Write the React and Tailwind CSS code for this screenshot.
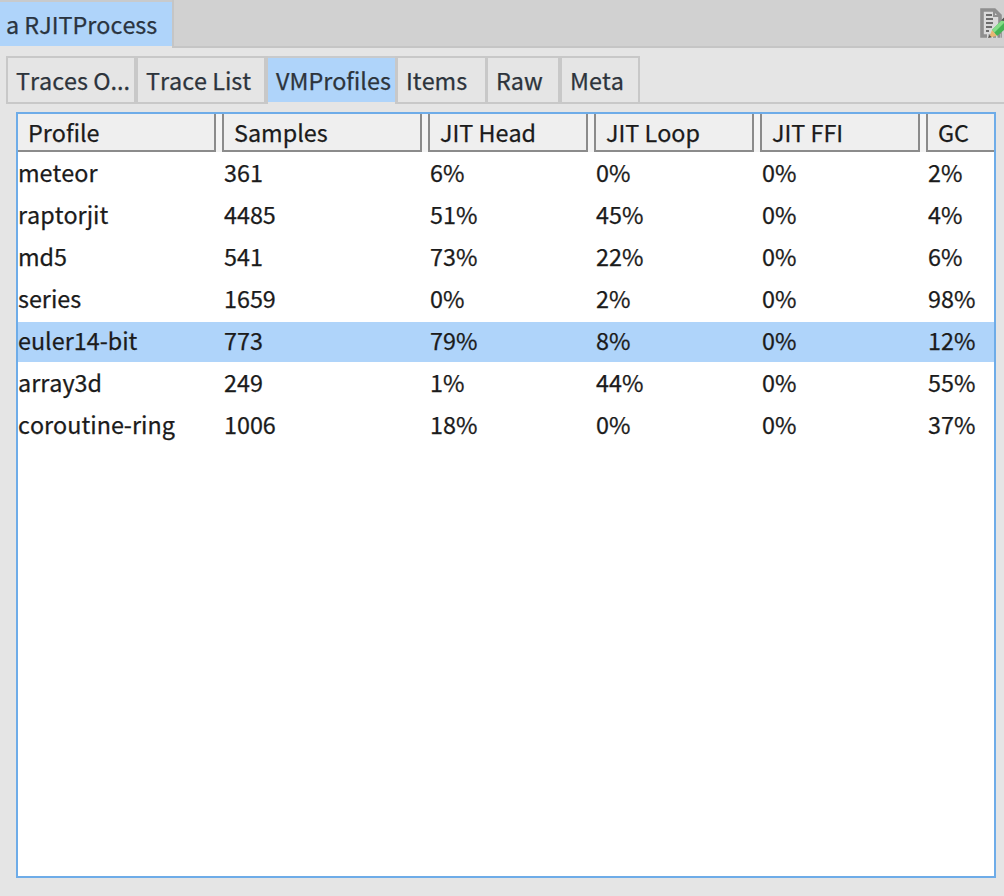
import React from "react";

const columns = ["Profile", "Samples", "JIT Head", "JIT Loop", "JIT FFI", "GC"];

const rows = [
  ["meteor", "361", "6%", "0%", "0%", "2%"],
  ["raptorjit", "4485", "51%", "45%", "0%", "4%"],
  ["md5", "541", "73%", "22%", "0%", "6%"],
  ["series", "1659", "0%", "2%", "0%", "98%"],
  ["euler14-bit", "773", "79%", "8%", "0%", "12%"],
  ["array3d", "249", "1%", "44%", "0%", "55%"],
  ["coroutine-ring", "1006", "18%", "0%", "0%", "37%"],
];

const tabs = [
  { label: "Traces O...", box: "w-[128px] border-l-2 pl-2" },
  { label: "Trace List", box: "w-[134px] border-x-[4px] pl-2" },
  { label: "VMProfiles", box: "w-[127px] pl-2", active: true },
  { label: "Items", box: "w-[90px] border-l-[3px] pl-2" },
  { label: "Raw", box: "w-[73px] border-l-[3px] pl-2" },
  { label: "Meta", box: "w-[82px] border-l-[4px] border-r-2 pl-2" },
];

function EditIcon() {
  return (
    <svg width="24" height="32" viewBox="0 0 24 32" className="block shrink-0">
      <path d="M2 2H14.500L20 7.500V28H2Z" fill="#dadada" stroke="#8f8f8f" strokeWidth="3.600" />
      <path d="M14 1.500V8H21" fill="none" stroke="#8f8f8f" strokeWidth="2" />
      <path d="M6 7H12M6 11H13M6 15H13M6 19H12M6 23H9" stroke="#6c6c6c" strokeWidth="2" />
      <path d="M7 28H21" stroke="#dadada" strokeWidth="4" strokeDasharray="1.500 3" />
      <path d="M12 22L24 10V22L17 28Z" fill="#45b455" />
      <path d="M12 22L24 10V15L14.500 24.500Z" fill="#84dd88" />
      <path d="M12 22L17 28L9 29.500Z" fill="#e9b773" />
      <path d="M8 30L9.500 27L11.500 29Z" fill="#555" />
      <path d="M21 12.500L24 9.500V13Z" fill="#555" />
    </svg>
  );
}

export default function App() {
  return (
    <div className="flex h-[896px] w-[1004px] flex-col overflow-hidden bg-[#e5e5e5] font-['Noto_Sans_CJK_SC',sans-serif] text-[23.35px] whitespace-nowrap [font-kerning:none] [-webkit-text-stroke:0.25px]">
      <header className="flex h-12 shrink-0">
        <div className="h-[46px] w-[172px] border-t-2 border-[#c8cacc] bg-[#afd4fa] pl-1.5 leading-[44px] text-[#2a3440]">
          a RJITProcess
        </div>
        <div className="flex flex-1 justify-end border-b-2 border-l-2 border-[#c5c5c5] bg-[#d1d1d1] pt-2">
          <EditIcon />
        </div>
      </header>

      <nav className="mt-2 flex h-12 shrink-0 pl-1.5 text-[#2d343c]">
        {tabs.map((t) =>
          t.active ? (
            <div key={t.label} className={`${t.box} h-[46px] border-t-2 border-[#c8cacc] bg-[#afd4fa] leading-[44px]`}>
              {t.label}
            </div>
          ) : (
            <div key={t.label} className={`${t.box} border-y-2 border-[#c8c8c8] leading-[44px]`}>
              {t.label}
            </div>
          )
        )}
        <div className="flex-1 border-b-2 border-[#c8c8c8]" />
      </nav>

      <main className="mt-2 mr-2 ml-4 h-[766px] w-[980px] shrink-0 overflow-hidden border-2 border-[#6eace8] bg-white text-[#1b1b1b]">
        <div className="grid h-[38px] grid-cols-[198px_200px_160px_160px_160px_68px] gap-x-1.5 bg-[#f4f4f4]">
          {columns.map((c) => (
            <div
              key={c}
              className="border-x-2 border-b-2 border-[#8b8b8b] bg-[#efefef] pl-2.5 leading-[36px] first:border-l-0 last:border-r-0"
            >
              {c}
            </div>
          ))}
        </div>
        <div className="flex flex-col gap-0.5 pt-0.5">
          {rows.map((r) => (
            <div
              key={r[0]}
              className={`grid h-10 grid-cols-[206px_206px_166px_166px_166px_66px] leading-9 ${
                r[0] === "euler14-bit" ? "bg-[#afd4fa]" : ""
              }`}
            >
              {r.map((v, i) => (
                <span key={i}>{v}</span>
              ))}
            </div>
          ))}
        </div>
      </main>
    </div>
  );
}
